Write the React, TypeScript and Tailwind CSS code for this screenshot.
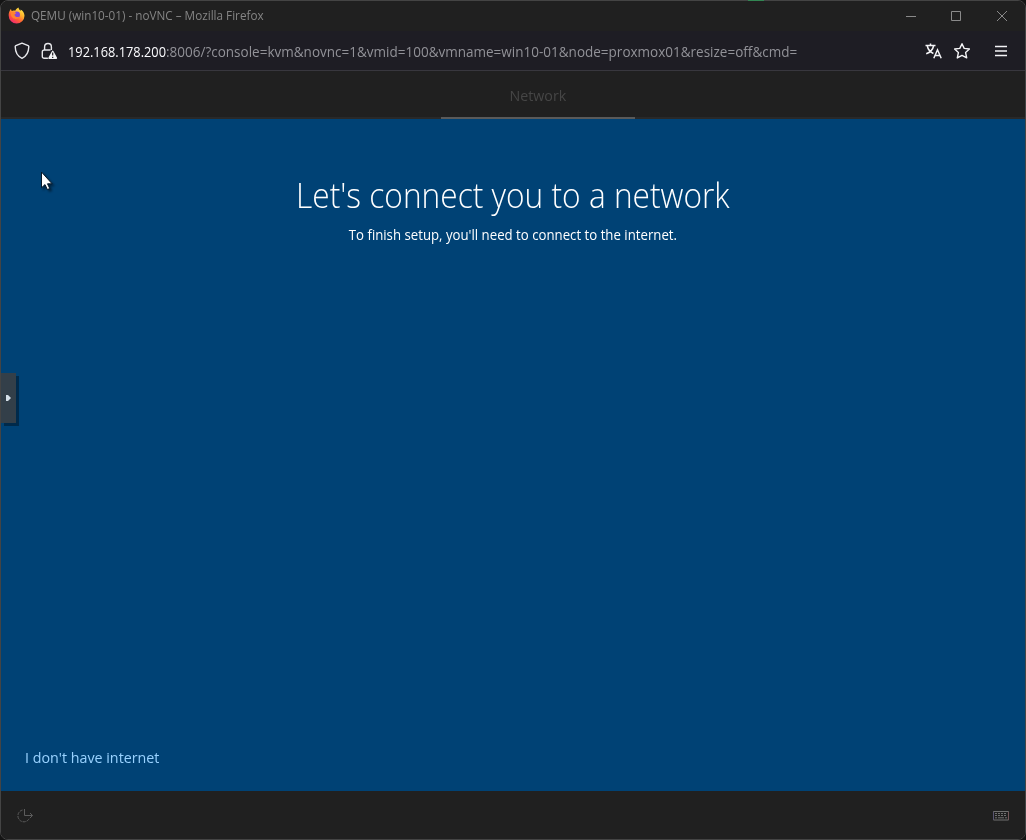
import React from "react";

function FirefoxLogo() {
  return (
    <svg width="17" height="17" viewBox="0 0 17 17" className="-mt-[2px] shrink-0">
      <defs>
        <linearGradient id="flame" x1="0.85" y1="0.05" x2="0.2" y2="1">
          <stop offset="0" stopColor="#fff04a" />
          <stop offset="0.35" stopColor="#ffb02c" />
          <stop offset="0.65" stopColor="#ff5f35" />
          <stop offset="1" stopColor="#f0207a" />
        </linearGradient>
      </defs>
      <path d="M10.4.4c.3 1.600 1.300 2.400 2.200 3.500.1-.6 0-1-.1-1.400 2.300 1.200 4 3.700 4 6.300a7.900 7.600 0 0 1-15.800 0C.5 6.400 1.200 4 3 1.700c.1 1.200.3 1.700.8 2.300C5 3.300 6 3.300 7.200 3.800 7.500 2.300 8.900 1.700 10.400.4z" fill="url(#flame)" />
      <circle cx="8.800" cy="7.700" r="3.200" fill="#8546d8" />
      <path d="M3 5.200c2-.7 4-.3 5.100 1L6.500 7.500c0 2.200 2.700 3.400 5.100 1.900-1 2.700-5 3.300-7 1.300C2.900 9.200 2.500 7.200 3 5.200z" fill="#ff842f" />
    </svg>
  );
}

function Shield() {
  return (
    <svg width="16" height="18" viewBox="0 0 16 18" fill="none" stroke="#e8e8ec" strokeWidth="1.400" strokeLinejoin="round" className="shrink-0">
      <path d="M8 1.200 14.200 3.700c.4.200.6.500.6.900-.1 5.300-2 9.700-6.800 11.700C3.200 14.300 1.300 9.900 1.200 4.600c0-.4.200-.7.600-.9z" />
    </svg>
  );
}

function InsecureLock() {
  return (
    <svg width="17" height="18" viewBox="0 0 17 18" fill="none" className="shrink-0">
      <path d="M3.600 8V4.900a3.400 3.400 0 0 1 6.800 0V7.400M6.400 16.300H3.200a1.900 1.900 0 0 1-1.900-1.900V9.900A1.900 1.900 0 0 1 3.200 8H9" stroke="#e8e8ec" strokeWidth="1.400" strokeLinecap="round" />
      <path d="M11.700 9.400 15.400 16.200H8z" fill="#f4f4f6" stroke="#f4f4f6" strokeWidth="1.500" strokeLinejoin="round" />
      <path d="M11.700 10.600v3M11.700 14.800v1.100" stroke="#1c1b22" strokeWidth="1.200" />
    </svg>
  );
}

function TitleBar() {
  return (
    <div className="flex h-[30px] shrink-0 items-center bg-[#202020] pl-[7px]">
      <FirefoxLogo />
      <span className="ml-[6px] w-[240px] origin-left scale-x-[0.976] whitespace-nowrap text-[12px] leading-4 text-[#858585]">
        QEMU (win10-01) - noVNC – Mozilla Firefox
      </span>
      <svg width="106" height="12" viewBox="0 0 106 12" fill="none" stroke="#8a8a8a" className="mr-[15px] ml-auto shrink-0">
        <path d="M2 6.500h10M47.500 1.500h9v9h-9zM93 1l10 10M103 1 93 11" />
      </svg>
    </div>
  );
}

function AddressBar() {
  return (
    <div className="flex h-10 shrink-0 items-center border-b border-[#38373e] bg-[#1e1d24] pl-[13px]">
      <Shield />
      <div className="ml-[11px] flex"><InsecureLock /></div>
      <div className="ml-[10px] flex w-[731px] pt-[2px] text-[14px] leading-5 whitespace-nowrap">
        <span className="w-[98px] shrink-0 origin-left scale-x-[0.915] text-[#fbfbfe]">192.168.178.200</span>
        <span className="w-[633px] shrink-0 origin-left scale-x-[0.965] text-[#929298]">
          :8006/?console=kvm&amp;novnc=1&amp;vmid=100&amp;vmname=win10-01&amp;node=proxmox01&amp;resize=off&amp;cmd=
        </span>
      </div>
      <svg width="17" height="16" viewBox="0 0 17 16" fill="none" stroke="#f4f4f6" strokeWidth="1.500" className="ml-auto shrink-0">
        <path d="M.5 2.500h10M5.500.5v2M2.200 2.500c.7 3.700 3.200 6.600 6.200 8M8.700 2.500c-.7 3.500-3.700 7-7.500 8.300M8.800 15.200 12.500 6.800l3.700 8.400M10 12.400h5" />
      </svg>
      <svg width="18" height="18" viewBox="0 0 18 18" fill="none" stroke="#f4f4f6" strokeWidth="1.400" strokeLinejoin="round" className="ml-[11px] shrink-0">
        <path d="m9 1.700 2.200 4.700 5.200.6-3.800 3.600 1.100 5.300L9 13.400 4.300 15.900l1.100-5.300L1.600 7l5.200-.6z" />
      </svg>
      <svg width="12" height="12" viewBox="0 0 12 12" stroke="#f4f4f6" strokeWidth="1.300" className="mr-[18px] ml-6 shrink-0">
        <path d="M0 1.500h12M0 6h12M0 10.500h12" />
      </svg>
    </div>
  );
}

function SetupPage() {
  return (
    <main className="relative flex h-[672px] shrink-0 flex-col items-center bg-[#004275] text-white">
      <h1 className="mt-[52px] scale-x-[0.931] whitespace-nowrap text-[34px] leading-[48px] font-light">Let&apos;s connect you to a network</h1>
      <p className="mt-[6px] scale-x-[0.944] whitespace-nowrap text-[14px] leading-5">To finish setup, you&apos;ll need to connect to the internet.</p>
      <a className="mt-auto mb-6 ml-6 origin-left scale-x-[0.952] self-start whitespace-nowrap text-[15px] leading-5 text-[#99d2ff]">I don&apos;t have internet</a>
      <svg width="18" height="23" viewBox="0 0 18 23" className="absolute top-[52px] left-[38px] drop-shadow-[2px_2px_1px_rgba(0,0,0,0.45)]">
        <path d="M2.500 1v15.800l3.500-3.200 2.400 5 2.400-1.100-2.300-4.700h4.600z" fill="#fff" stroke="#06182a" />
      </svg>
      <div className="absolute top-[254px] left-0 flex h-[50px] w-[15px] items-center bg-[#333f49] pl-[5px] shadow-[3px_3px_0_#002a4b]">
        <svg width="5" height="6" viewBox="0 0 5 6" className="shrink-0"><path d="M0 0h2l3 3-3 3H0z" fill="#d5e0e9" /></svg>
      </div>
    </main>
  );
}

function Footer() {
  return (
    <footer className="flex h-12 shrink-0 items-center justify-between bg-[#202020] pt-[2px] pr-4 pl-[15px]">
      <svg width="19" height="16" viewBox="0 0 19 16" fill="none" stroke="#5c5c5c">
        <path d="M6.500 2A6 6 0 1 0 13.500 10" strokeDasharray="3 1" />
        <path d="M8.500 1v6.500H16.500M14 5l2.500 2.500L14 10" />
      </svg>
      <svg width="16" height="10" viewBox="0 0 16 10" fill="none" stroke="#707070">
        <path d="M.5.500h15v8.500H.500z" />
        <path d="M2 2.500h12M2 4.500h12" strokeDasharray="2 1" />
        <path d="M2 6.800h2M5 6.800h6M12 6.800h2" />
        <path d="M0 1v8" stroke="#433d72" />
        <path d="M16 1v8" stroke="#784145" />
      </svg>
    </footer>
  );
}

export default function App() {
  return (
    <div className="relative h-[840px] w-[1026px] overflow-hidden bg-[#141414] font-['Open_Sans','Noto_Sans',sans-serif]">
      <div className="flex h-[840px] w-[1026px] flex-col overflow-hidden rounded-[8px] border border-[#444]">
        <TitleBar />
        <AddressBar />
        <header className="flex h-12 shrink-0 justify-center border-b-2 border-[#292929] bg-[#202020] pl-[49px]">
          <div className="-mb-[2px] flex h-12 w-[194px] items-center justify-center border-b-2 border-[#5a5a5a] pt-px text-[15px] leading-5 text-[#464646]">
            <span className="scale-x-[0.95]">Network</span>
          </div>
        </header>
        <SetupPage />
        <Footer />
      </div>
      <div className="absolute top-0 left-[748px] h-px w-4 bg-[#328653]" />
    </div>
  );
}
